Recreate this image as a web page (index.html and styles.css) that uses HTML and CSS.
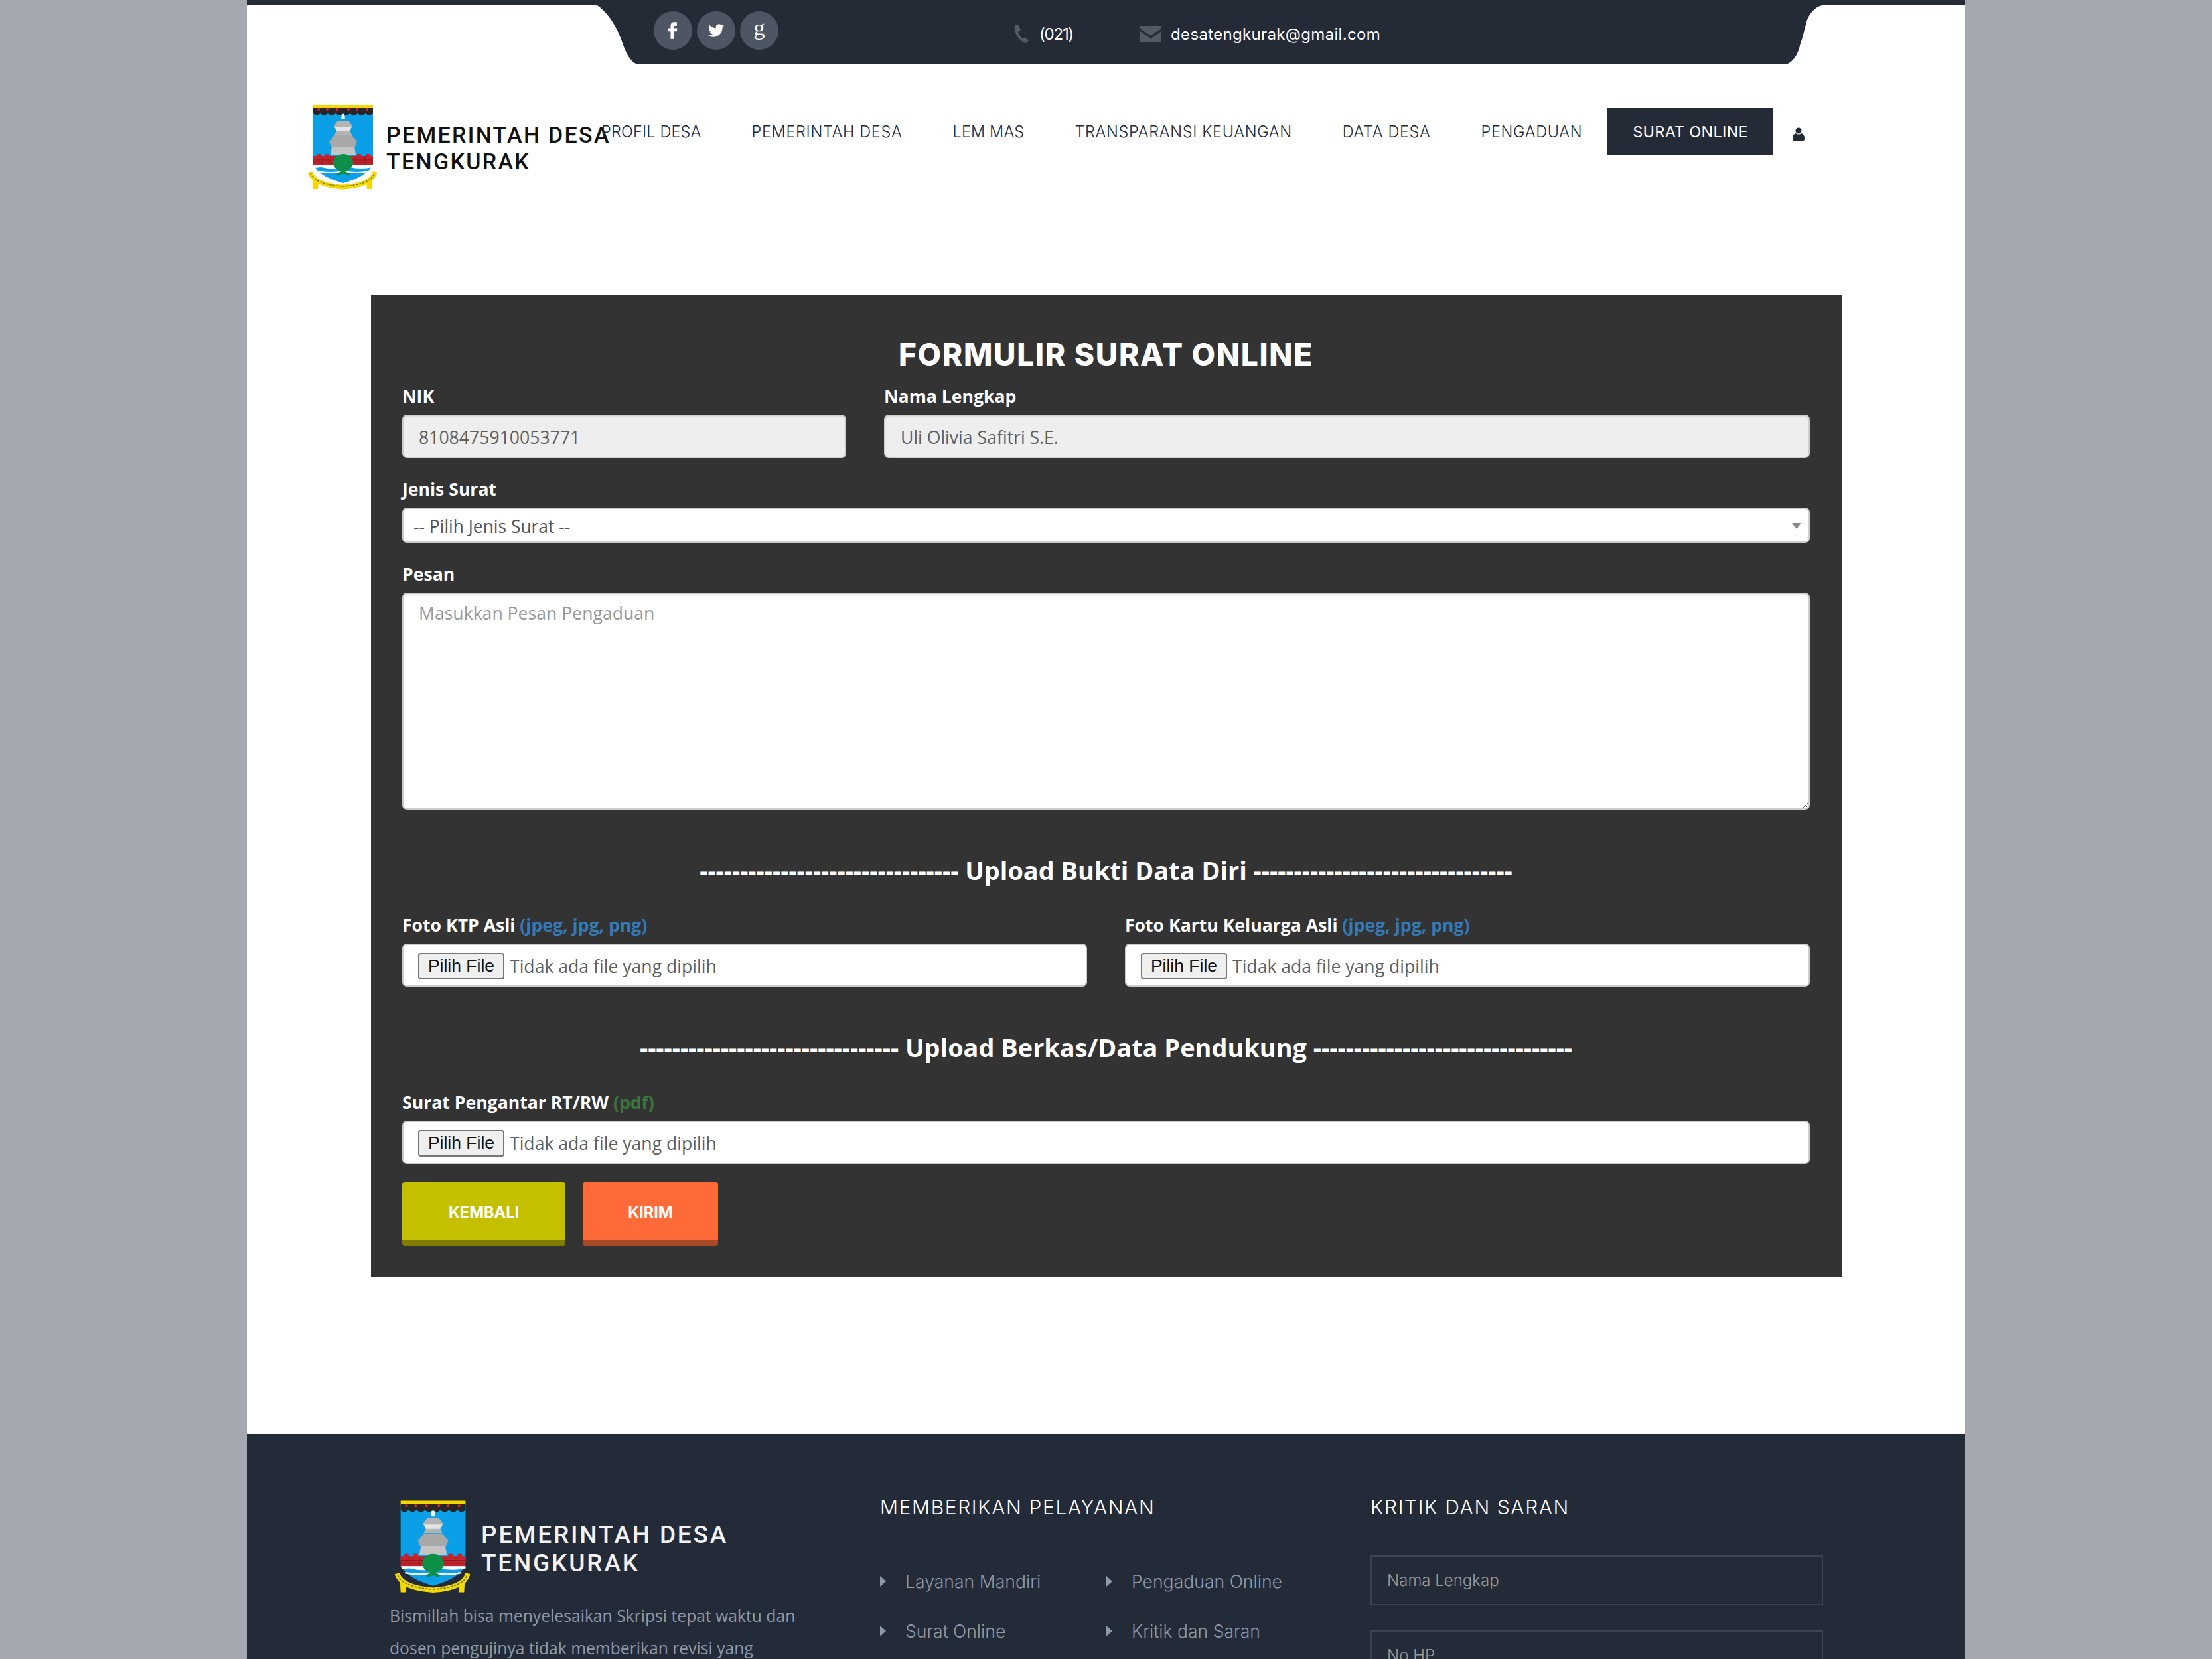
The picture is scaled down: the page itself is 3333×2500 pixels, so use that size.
FILE: index.html
```html
<!DOCTYPE html>
<html lang="id">
<head>
<meta charset="utf-8">
<title>Surat Online - Pemerintah Desa Tengkurak</title>
<link rel="stylesheet" href="styles.css">
</head>
<body>
<svg class="defs" width="0" height="0" aria-hidden="true">
  <symbol id="crest" viewBox="0 0 104 130">
    <path d="M8 6H98V85Q98 106 53 119Q8 106 8 85Z" fill="#0a9fe6"/>
    <rect x="8" y="1" width="90" height="6" fill="#f2d900"/>
    <path d="M8 6H98V14Q92 19 87 14Q81 19 75 14Q69 19 63 14Q58 19 53 14Q47 19 42 14Q36 19 30 14Q24 19 19 14Q13 19 8 14Z" fill="#2b2424"/>
    <g fill="#d4262c"><circle cx="16" cy="8" r="2"/><circle cx="29" cy="8" r="2"/><circle cx="44" cy="8" r="2"/><circle cx="61" cy="8" r="2"/><circle cx="74" cy="8" r="2"/><circle cx="89" cy="8" r="2"/></g>
    <path d="M50 23L51 15H55L56 23Z" fill="#f4f4f4"/>
    <path d="M45 25H61L67 33L63 40L66 46H40L43 40L39 33Z" fill="#b4b4b4"/>
    <path d="M40 34H66L63 40H43Z" fill="#e4e4e4"/>
    <path d="M40 47H66L74 56L71 64H35L32 56Z" fill="#a8a8a8"/>
    <path d="M36 64H70L72 76H34Z" fill="#c4c4c4"/>
    <path d="M8 78H13V75H19V78H26V75H32V78H74V75H80V78H87V75H93V78H98V92H8Z" fill="#c3232b"/>
    <path d="M8 84H98M8 88H98M20 78V92M34 78V92M72 78V92M86 78V92" stroke="#8e1a20" stroke-width="1"/>
    <path d="M8 92H98V95Q80 99 62 95Q40 100 20 95L10 96Z" fill="#fff"/>
    <path d="M14 101Q34 105 53 101Q74 105 92 101" stroke="#fff" stroke-width="2" fill="none"/>
    <path d="M53 88V105M53 102L44 106M53 102L62 106" stroke="#0d8f48" stroke-width="4" fill="none"/>
    <ellipse cx="53" cy="88" rx="15" ry="13" fill="#0d8f48"/>
    <path d="M3 102Q9 122 53 125Q97 122 101 102" stroke="#f2d900" stroke-width="7" fill="none"/>
    <path d="M4 104Q10 121 53 124Q96 121 100 104" stroke="#6d6a1c" stroke-width="1.500" stroke-dasharray="3 2" fill="none"/>
    <path d="M7 112L16 118L15 128H8ZM97 112L88 118L89 128H96Z" fill="#f2d900"/>
  </symbol>
</svg>
<div class="page">
  <header class="topbar">
    <div class="tab">
      <svg class="tab-shape" width="1850" height="97" viewBox="0 0 1850 97"><path d="M0 0H1850V8H1847C1836 9 1826 20 1822 33C1818 48 1816 58 1813 65C1810 78 1806 90 1792 97H60C50 93 43 80 38 65C33 50 22 24 0 8Z" fill="#242a36"/></svg>
      <div class="social">
        <a class="circle"><svg width="24" height="28" viewBox="4 2 16 24"><path fill="#fff" d="M14 8h3V3h-3.500C10.500 3 9 5 9 8v3H6v4h3v10h4.500V15H17l.5-4h-4V9c0-.6.3-1 .5-1z"/></svg></a>
        <a class="circle"><svg width="24" height="24" viewBox="0 0 24 24"><path fill="#fff" d="M23.953 4.57a10 10 0 01-2.825.775 4.958 4.958 0 002.163-2.723c-.951.555-2.005.959-3.127 1.184a4.92 4.92 0 00-8.384 4.482C7.69 8.095 4.067 6.13 1.64 3.162a4.822 4.822 0 00-.666 2.475c0 1.71.87 3.213 2.188 4.096a4.904 4.904 0 01-2.228-.616v.06a4.923 4.923 0 003.946 4.827 4.996 4.996 0 01-2.212.085 4.936 4.936 0 004.604 3.417 9.867 9.867 0 01-6.102 2.105c-.39 0-.779-.023-1.17-.067a13.995 13.995 0 007.557 2.209c9.053 0 13.998-7.496 13.998-13.985 0-.21 0-.42-.015-.63A9.935 9.935 0 0024 4.590z"/></svg></a>
        <a class="circle circle-g">g</a>
      </div>
      <div class="contact">
        <svg class="ico-phone" width="25" height="28" viewBox="0 0 25 28"><path fill="#525a66" d="M3 1L8 0L12 8L8 11C9 15 12 19 15 21L18 19L24 24L20 28C10 26 1 12 3 1Z"/></svg>
        <span class="contact-text phone">(021)</span>
        <svg class="ico-mail" width="32" height="24" viewBox="0 0 32 24"><path fill="#525a66" d="M0 0H32V4L16 15L0 4ZM0 8L16 19L32 8V24H0Z"/></svg>
        <span class="contact-text">desatengkurak@gmail.com</span>
      </div>
    </div>
  </header>

  <div class="masthead">
    <div class="brand">
      <svg class="crest" width="104" height="130"><use href="#crest"/></svg>
      <div class="brand-name">PEMERINTAH DESA<br>TENGKURAK</div>
    </div>
    <nav class="nav">
      <a class="nav-item nav-tight">PROFIL DESA</a>
      <a class="nav-item">PEMERINTAH DESA</a>
      <a class="nav-item nav-tight">LEM MAS</a>
      <a class="nav-item">TRANSPARANSI KEUANGAN</a>
      <a class="nav-item">DATA DESA</a>
      <a class="nav-item">PENGADUAN</a>
      <a class="nav-item nav-active">SURAT ONLINE</a>
      <a class="nav-user"><svg width="18" height="20" viewBox="0 0 18 20"><circle cx="9" cy="5" r="4.500" fill="#242a36"/><path fill="#242a36" d="M2 20C0 20 0 18 0 16C0 12 3 9 5 9C7 11 11 11 13 9C15 9 18 12 18 16C18 18 18 20 16 20Z"/></svg></a>
    </nav>
  </div>

  <main class="panel">
    <h1 class="panel-title">FORMULIR SURAT ONLINE</h1>
    <div class="row row-id">
      <div class="field"><label class="label">NIK</label><input class="control readonly" type="text" readonly value="8108475910053771"></div>
      <div class="field"><label class="label">Nama Lengkap</label><input class="control readonly" type="text" readonly value="Uli Olivia Safitri S.E."></div>
    </div>
    <div class="field">
      <label class="label">Jenis Surat</label>
      <div class="select-wrap">
        <select class="select"><option>-- Pilih Jenis Surat --</option></select>
        <span class="select-arrow"></span>
      </div>
    </div>
    <div class="field field-last">
      <label class="label">Pesan</label>
      <textarea class="control textarea" placeholder="Masukkan Pesan Pengaduan"></textarea>
    </div>
    <h2 class="section-title">-------------------------------- Upload Bukti Data Diri --------------------------------</h2>
    <div class="row row-files">
      <div class="field-file"><label class="label">Foto KTP Asli <span class="hint-blue">(jpeg, jpg, png)</span></label>
        <div class="file"><span class="file-btn">Pilih File</span><span class="file-name">Tidak ada file yang dipilih</span></div></div>
      <div class="field-file"><label class="label">Foto Kartu Keluarga Asli <span class="hint-blue">(jpeg, jpg, png)</span></label>
        <div class="file"><span class="file-btn">Pilih File</span><span class="file-name">Tidak ada file yang dipilih</span></div></div>
    </div>
    <h2 class="section-title">-------------------------------- Upload Berkas/Data Pendukung --------------------------------</h2>
    <div class="field-file"><label class="label">Surat Pengantar RT/RW <span class="hint-green">(pdf)</span></label>
      <div class="file"><span class="file-btn">Pilih File</span><span class="file-name">Tidak ada file yang dipilih</span></div></div>
    <div class="actions">
      <a class="btn btn-back">KEMBALI</a>
      <a class="btn btn-send">KIRIM</a>
    </div>
  </main>

  <footer class="footer">
    <div class="foot-col">
      <div class="foot-brand">
        <svg class="foot-crest" width="113" height="142"><use href="#crest"/></svg>
        <div class="foot-name">PEMERINTAH DESA<br>TENGKURAK</div>
      </div>
      <p class="foot-text">Bismillah bisa menyelesaikan Skripsi tepat waktu dan<br>dosen pengujinya tidak memberikan revisi yang</p>
    </div>
    <div class="foot-col">
      <h3 class="foot-title">MEMBERIKAN PELAYANAN</h3>
      <ul class="foot-links">
        <li class="foot-link">Layanan Mandiri</li>
        <li class="foot-link">Pengaduan Online</li>
        <li class="foot-link">Surat Online</li>
        <li class="foot-link">Kritik dan Saran</li>
      </ul>
    </div>
    <div class="foot-col">
      <h3 class="foot-title">KRITIK DAN SARAN</h3>
      <div class="foot-form">
        <input class="foot-input" type="text" placeholder="Nama Lengkap">
        <input class="foot-input" type="text" placeholder="No HP">
      </div>
    </div>
  </footer>
</div>
</body>
</html>
```
FILE: styles.css
```css
* { box-sizing: border-box; }
html, body { margin: 0; height: 2500px; overflow: hidden; }
body { background: #a5a8b1; font-family: "Open Sans", sans-serif; font-size: 26.6px; color: #fff; }
.defs { position: absolute; }
.page { width: 2589px; height: 2500px; margin: 0 auto; background: #fff; overflow: hidden; }

.topbar { height: 97px; background: linear-gradient(#242a36 8px, #fff 8px); padding-left: 528px; }
.tab { position: relative; width: 1845px; height: 97px; display: flex; align-items: flex-start; }
.tab-shape { position: absolute; left: 0; top: 0; }
.social { position: relative; display: flex; gap: 7px; margin: 17px 0 0 85px; }
.circle { width: 58px; height: 58px; border-radius: 50%; background: #4f5663; display: flex; align-items: center; justify-content: center; }
.circle-g { font-family: "Liberation Serif", serif; font-weight: 400; font-size: 34px; line-height: 1; color: #fff; padding-bottom: 8px; }
.contact { position: relative; display: flex; align-items: center; margin: 33px 0 0 353px; font-family: Inter, sans-serif; font-size: 24px; height: 36px; }
.contact-text { color: #fff; font-weight: 400; letter-spacing: 0.33px; }
.ico-phone { margin-right: 15px; }
.phone { margin-right: 101px; letter-spacing: -1.200px; }
.ico-mail { margin-right: 14px; }

.masthead { height: 348px; padding: 60px 0 0 92px; display: flex; align-items: flex-start; }
.brand { width: 404px; flex-shrink: 0; display: flex; align-items: flex-start; gap: 14px; }
.brand-name { margin-top: 26px; font-family: Roboto, sans-serif; font-weight: 500; font-size: 34px; line-height: 40px; letter-spacing: 2.300px; color: #111; white-space: nowrap; }
.crest { flex-shrink: 0; }
.nav { display: flex; align-items: center; margin-top: 6px; font-family: Inter, sans-serif; font-weight: 300; font-size: 23.5px; letter-spacing: 0.65px; color: #242a36; }
.nav-item { height: 70px; padding: 0 38px; display: flex; align-items: center; white-space: nowrap; }
.nav-tight { letter-spacing: 0.15px; }
.nav-active { background: #242a36; color: #fff; font-weight: 400; letter-spacing: 0.25px; }
.nav-user { margin-left: 29px; margin-top: 8px; display: flex; }

.panel { width: 2216px; height: 1480px; margin: 0 0 236px 187px; background: #333; padding: 64px 48px 48px 47px; }
.panel-title { margin: 0; font-family: Inter, sans-serif; font-weight: 800; font-size: 46px; line-height: 50px; letter-spacing: 1.700px; text-align: center; color: #fff; }
.row { display: flex; gap: 57px; }
.row-id { margin-top: 19px; }
.row-id .field:first-child { width: 669px; flex-shrink: 0; }
.row-id .field:last-child { flex: 1; }
.row-files .field-file { flex: 1; }
.field { margin-bottom: 28px; }
.field-last { margin-bottom: 0; }
.label { display: block; font-weight: 700; line-height: 38px; margin-bottom: 9px; color: #fff; }
.hint-blue { color: #337ab7; }
.hint-green { color: #3c763d; }
.control { display: block; width: 100%; height: 65px; padding: 2px 21px 0 23px; border: 2px solid #ccc; border-radius: 7px; font: inherit; color: #606060; background: #fff; box-shadow: inset 0 2px 2px rgba(0,0,0,.075); }
.readonly { background: #eee; outline: 0; }
.select-wrap { position: relative; }
.select { display: block; width: 100%; height: 53px; padding: 2px 15px 0; border: 2px solid #ccc; border-radius: 7px; font: inherit; font-size: 26.4px; color: #555; background: #fff; appearance: none; }
.select-arrow { position: absolute; right: 13px; top: 23px; border-style: solid; border-width: 9px 7.5px 0; border-color: #888 transparent transparent; }
.textarea { height: 327px; padding: 10px 21px 10px 23px; resize: vertical; line-height: 38px; }
.textarea::placeholder { color: #999; }
.section-title { margin: 71px 0 44px; font-weight: 700; font-size: 37.9px; line-height: 40px; text-align: center; color: #fff; white-space: nowrap; }
.file { display: flex; align-items: center; height: 65px; padding: 2px 0 0 22px; border: 2px solid #ccc; border-radius: 7px; background: #fff; }
.file-btn { width: 130px; height: 40px; display: flex; align-items: center; justify-content: center; margin-right: 8px; border: 2px solid #767676; border-radius: 4px; background: #efefef; font-family: "Liberation Sans", sans-serif; font-size: 26.5px; color: #111; }
.file-name { color: #606060; }
.actions { display: flex; gap: 26px; margin-top: 27px; }
.btn { height: 96px; padding-top: 2px; display: flex; align-items: center; justify-content: center; border-radius: 4px; border-bottom: 8px solid; font-family: Inter, sans-serif; font-weight: 700; font-size: 23.5px; color: #fff; }
.btn-back { width: 246px; background: #c4c000; border-color: #7f7c00; }
.btn-send { width: 204px; background: #ff6b38; border-color: #a8492a; }

.footer { height: 339px; background: #242b38; padding: 90px 0 0 215px; display: grid; grid-template-columns: 739px 739px 682px; align-items: start; }
.foot-brand { display: flex; align-items: flex-start; gap: 17px; margin: 9px 0 8px 8px; }
.foot-crest { flex-shrink: 0; }
.foot-name { margin-top: 31px; font-family: Roboto, sans-serif; font-weight: 500; font-size: 37px; line-height: 43px; letter-spacing: 2.800px; color: #f2f2f2; white-space: nowrap; }
.foot-text { margin: 0; font-size: 24.7px; line-height: 49px; color: #8e99a8; white-space: nowrap; }
.foot-title { margin: 0; font-family: Inter, sans-serif; font-weight: 300; font-size: 30px; line-height: 40px; letter-spacing: 1.600px; color: #fff; }
.foot-links { list-style: none; margin: 55px 0 0; padding: 0; display: grid; grid-template-columns: 341px 341px; font-family: Inter, sans-serif; font-weight: 300; }
.foot-link { position: relative; padding-left: 38px; height: 75px; line-height: 75px; font-size: 26.6px; color: #8e99a8; }
.foot-link::before { content: ""; position: absolute; left: 0; top: 29px; border-style: solid; border-width: 8px 0 8px 9px; border-color: transparent transparent transparent #8e99a8; }
.foot-form { margin-top: 53px; display: flex; flex-direction: column; gap: 38px; }
.foot-input { width: 682px; height: 75px; padding: 0 23px; border: 2px solid #3a4350; background: transparent; font-family: Inter, sans-serif; font-weight: 300; font-size: 24px; color: #999; border-radius: 0; }
.foot-input::placeholder { color: #9a9a9a; opacity: 1; }
```
